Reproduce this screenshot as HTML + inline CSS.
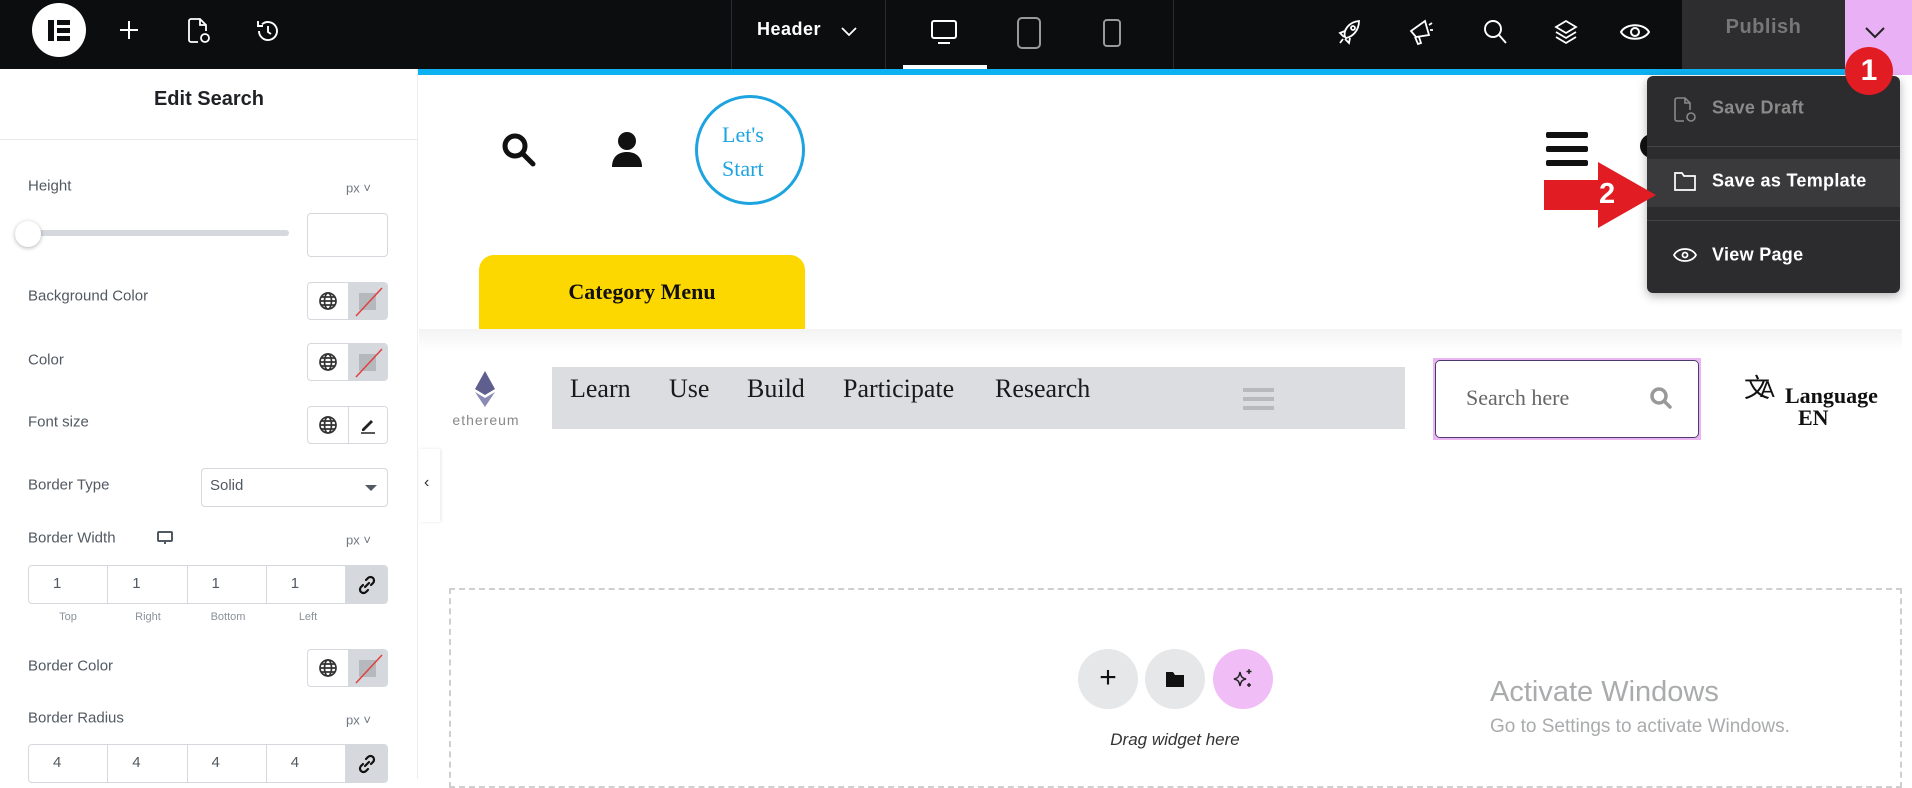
<!DOCTYPE html>
<html><head><meta charset="utf-8"><style>
*{box-sizing:border-box;margin:0;padding:0}
body{width:1912px;height:779px;overflow:hidden;background:#fff;font-family:"Liberation Sans",sans-serif;position:relative}
.a{position:absolute}
.top{left:0;top:0;width:1912px;height:69px;background:#0c0d0f}
.sep{top:0;width:1px;height:69px;background:#2a2c30}
.lbl{position:absolute;left:28px;font-size:15px;color:#515962;transform:translateY(-50%)}
.px{position:absolute;left:346px;font-size:13px;color:#6d7882;transform:translateY(-50%)}
.box{position:absolute;border:1px solid #d5d8dc;border-radius:4px;background:#fff}
.ctl{position:absolute;left:307px;width:81px;height:38px;border:1px solid #d5d8dc;border-radius:4px;overflow:hidden;display:flex}
.ctl .g{width:41px;display:flex;align-items:center;justify-content:center;border-right:1px solid #d5d8dc}
.ctl .s{flex:1;background:#d5d8dc;position:relative}
.dims{position:absolute;left:28px;width:360px;height:39px;border:1px solid #d5d8dc;border-radius:4px;display:flex;overflow:hidden}
.dims div{flex:1;border-right:1px solid #d5d8dc;font-size:15px;color:#515962;padding:9px 0 0 24px}
.dims .lk{flex:0 0 41px;background:#d5d8dc;border:0;padding:0;display:flex;align-items:center;justify-content:center}
.sub{position:absolute;top:611px;font-size:11px;color:#8a929a;width:80px;text-align:center}
.serif{font-family:"Liberation Serif",serif}
.nav{font-family:"Liberation Serif",serif;font-size:26px;color:#1a1a1a;top:374px}
.mi{position:absolute;left:1712px;font-size:18px;font-weight:bold;color:#fff;letter-spacing:.3px;transform:translateY(-50%)}
</style></head><body>
<svg width="0" height="0" style="position:absolute"><defs>
<symbol id="gl" viewBox="0 0 20 20"><g fill="none" stroke="#333" stroke-width="1.7"><circle cx="10" cy="10" r="8"/><ellipse cx="10" cy="10" rx="3.5" ry="8"/><path d="M2 10h16M3.5 6h13M3.5 14h13"/></g></symbol>
<symbol id="lk" viewBox="0 0 20 20"><g fill="none" stroke="#111" stroke-width="2.2" stroke-linecap="round"><path d="M8 12l4-4"/><path d="M9 5l2-2a3.5 3.5 0 0 1 5 5l-2 2"/><path d="M11 15l-2 2a3.5 3.5 0 0 1-5-5l2-2"/></g></symbol>
</defs></svg>
<!-- top bar -->
<div class="a top"></div>
<div class="a" style="left:32px;top:3px;width:54px;height:54px;border-radius:50%;background:#fff"></div>
<div class="a" style="left:48px;top:20px;width:6px;height:21px;background:#0c0d0f"></div>
<div class="a" style="left:57px;top:20px;width:13px;height:5px;background:#0c0d0f"></div>
<div class="a" style="left:57px;top:28px;width:13px;height:5px;background:#0c0d0f"></div>
<div class="a" style="left:57px;top:36px;width:13px;height:5px;background:#0c0d0f"></div>
<svg class="a" style="left:117px;top:18px" width="24" height="24" viewBox="0 0 24 24" stroke="#fff" stroke-width="2" fill="none"><path d="M12 3v18M3 12h18"/></svg>
<svg class="a" style="left:186px;top:17px" width="26" height="28" viewBox="0 0 26 28" stroke="#fff" stroke-width="1.8" fill="none"><path d="M12 25H5a2 2 0 0 1-2-2V4a2 2 0 0 1 2-2h9l6 6v6"/><path d="M14 2v6h6"/><circle cx="19" cy="21" r="4"/></svg>
<svg class="a" style="left:255px;top:18px" width="26" height="26" viewBox="0 0 26 26" stroke="#fff" stroke-width="1.9" fill="none"><path d="M4 13a9 9 0 1 0 3-6.7"/><path d="M3 3v5h5"/><path d="M13 8v6l3 2"/></svg>
<div class="a sep" style="left:731px"></div>
<div class="a sep" style="left:885px"></div>
<div class="a sep" style="left:1173px"></div>
<div class="a" style="left:757px;top:19px;font-size:18px;font-weight:bold;color:#fff;letter-spacing:.5px">Header</div>
<svg class="a" style="left:840px;top:24px" width="18" height="14" viewBox="0 0 18 14" stroke="#fff" stroke-width="1.8" fill="none"><path d="M2 4l7 7 7-7"/></svg>
<svg class="a" style="left:930px;top:18px" width="28" height="28" viewBox="0 0 28 28" stroke="#fff" stroke-width="2" fill="none"><rect x="2" y="3" width="24" height="17" rx="2"/><path d="M8 25h12"/></svg>
<div class="a" style="left:903px;top:65px;width:84px;height:4px;background:#fff"></div>
<svg class="a" style="left:1015px;top:16px" width="28" height="34" viewBox="0 0 28 34" stroke="#999" stroke-width="2" fill="none"><rect x="3" y="2" width="22" height="30" rx="4"/></svg>
<svg class="a" style="left:1102px;top:18px" width="20" height="30" viewBox="0 0 20 30" stroke="#999" stroke-width="2" fill="none"><rect x="2" y="2" width="16" height="26" rx="3"/></svg>
<svg class="a" style="left:1337px;top:18px" width="26" height="28" viewBox="0 0 26 28" stroke="#fff" stroke-width="1.8" fill="none"><path d="M8 19C6 12 12 4 22 3c0 10-7 16-13 17z"/><circle cx="16" cy="10" r="2"/><path d="M8 13l-5 2 4 4M13 20l-1 5-4-4M6 21l-3 4"/></svg>
<svg class="a" style="left:1407px;top:17px" width="28" height="30" viewBox="0 0 28 30" stroke="#fff" stroke-width="1.8" fill="none"><path d="M4 14l14-10 4 14-13 2z"/><path d="M8 20l3 7 3-1-2-6"/><path d="M22 8l3-2M23 13h3"/></svg>
<svg class="a" style="left:1482px;top:18px" width="26" height="28" viewBox="0 0 26 28" stroke="#fff" stroke-width="1.9" fill="none"><circle cx="11" cy="11" r="8"/><path d="M17 17l7 8"/></svg>
<svg class="a" style="left:1553px;top:18px" width="26" height="28" viewBox="0 0 26 28" stroke="#fff" stroke-width="1.8" fill="none"><path d="M13 3L3 9l10 6 10-6z"/><path d="M3 14l10 6 10-6M3 19l10 6 10-6"/></svg>
<svg class="a" style="left:1619px;top:20px" width="32" height="24" viewBox="0 0 32 24" stroke="#fff" stroke-width="2" fill="none"><path d="M2 12C7 3 25 3 30 12 25 21 7 21 2 12z"/><circle cx="16" cy="12" r="4"/></svg>
<div class="a" style="left:1682px;top:0;width:163px;height:69px;background:#2d2d2f"></div>
<div class="a" style="left:1682px;top:16px;width:163px;text-align:center;font-size:20px;font-weight:bold;color:#777;letter-spacing:.5px">Publish</div>
<div class="a" style="left:1845px;top:0;width:67px;height:75px;background:#eab0f5"></div>
<svg class="a" style="left:1863px;top:24px" width="24" height="16" viewBox="0 0 24 16" stroke="#222" stroke-width="2" fill="none"><path d="M3 4l9 9 9-9"/></svg>
<!-- blue line -->
<div class="a" style="left:418px;top:69px;width:1427px;height:6px;background:#0db0f0"></div>
<!-- sidebar -->
<div class="a" style="left:0;top:69px;width:418px;height:710px;background:#fff;border-right:1px solid #eee"></div>
<div class="a" style="left:0;top:88px;width:418px;text-align:center;font-size:20px;font-weight:bold;color:#1f2124">Edit Search</div>
<div class="a" style="left:0;top:139px;width:418px;height:1px;background:#e6e8ea"></div>
<div class="lbl" style="top:186px">Height</div><div class="px" style="top:188px">px ˅</div>
<div class="a" style="left:28px;top:230px;width:261px;height:6px;border-radius:3px;background:#d5d8dc"></div>
<div class="a" style="left:15px;top:221px;width:26px;height:26px;border-radius:50%;background:#fff;box-shadow:0 1px 4px rgba(0,0,0,.3)"></div>
<div class="box" style="left:307px;top:213px;width:81px;height:44px"></div>
<div class="lbl" style="top:296px">Background Color</div>
<div class="lbl" style="top:360px">Color</div>
<div class="lbl" style="top:422px">Font size</div>
<div class="lbl" style="top:485px">Border Type</div>
<div class="lbl" style="top:538px">Border Width</div>
<svg class="a" style="left:156px;top:530px" width="18" height="16" viewBox="0 0 18 16" fill="none" stroke="#515962" stroke-width="2"><rect x="2" y="2" width="14" height="9" rx="1"/><path d="M9 12v2"/></svg>
<div class="px" style="top:540px">px ˅</div>
<div class="lbl" style="top:666px">Border Color</div>
<div class="lbl" style="top:718px">Border Radius</div><div class="px" style="top:720px">px ˅</div>
<!-- color controls -->
<div class="ctl" style="top:282px"><div class="g"><svg width="20" height="20"><use href="#gl"/></svg></div><div class="s"><svg width="40" height="38" style="position:absolute;left:0;top:0"><rect x="10" y="10" width="17" height="17" fill="#b5b8bc"/><path d="M7 33L33 5" stroke="#e04040" stroke-width="1.5"/></svg></div></div>
<div class="ctl" style="top:343px"><div class="g"><svg width="20" height="20"><use href="#gl"/></svg></div><div class="s"><svg width="40" height="38" style="position:absolute;left:0;top:0"><rect x="10" y="10" width="17" height="17" fill="#b5b8bc"/><path d="M7 33L33 5" stroke="#e04040" stroke-width="1.5"/></svg></div></div>
<div class="ctl" style="top:406px"><div class="g"><svg width="20" height="20"><use href="#gl"/></svg></div><div class="s" style="background:#fff;display:flex;align-items:center;justify-content:center"><svg width="20" height="20" viewBox="0 0 20 20"><path d="M4 14l9-9 2 2-9 9H4z" fill="#222"/><path d="M3 18h14" stroke="#222" stroke-width="1.5"/></svg></div></div>
<div class="ctl" style="top:649px"><div class="g"><svg width="20" height="20"><use href="#gl"/></svg></div><div class="s"><svg width="40" height="38" style="position:absolute;left:0;top:0"><rect x="10" y="10" width="17" height="17" fill="#b5b8bc"/><path d="M7 33L33 5" stroke="#e04040" stroke-width="1.5"/></svg></div></div>
<div class="box" style="left:201px;top:468px;width:187px;height:39px;font-size:15px;color:#515962;padding:8px 0 0 8px">Solid</div>
<div class="a" style="left:365px;top:485px;border-left:6px solid transparent;border-right:6px solid transparent;border-top:6px solid #515962"></div>
<div class="dims" style="top:565px"><div>1</div><div>1</div><div>1</div><div>1</div><div class="lk"><svg width="20" height="20"><use href="#lk"/></svg></div></div>
<div class="sub" style="left:28px">Top</div><div class="sub" style="left:108px">Right</div><div class="sub" style="left:188px">Bottom</div><div class="sub" style="left:268px">Left</div>
<div class="dims" style="top:744px"><div>4</div><div>4</div><div>4</div><div>4</div><div class="lk"><svg width="20" height="20"><use href="#lk"/></svg></div></div>
<!-- collapse tab -->
<div class="a" style="left:419px;top:449px;width:21px;height:73px;background:#fff;box-shadow:1px 0 3px rgba(0,0,0,.1)"></div>
<div class="a" style="left:424px;top:474px;font-size:16px;color:#333">‹</div>
<!-- canvas header -->
<svg class="a" style="left:500px;top:131px" width="38" height="38" viewBox="0 0 38 38" fill="none" stroke="#111" stroke-width="5"><circle cx="15" cy="15" r="10"/><path d="M23 23l10 10" stroke-linecap="round"/></svg>
<svg class="a" style="left:610px;top:131px" width="34" height="38" viewBox="0 0 34 38" fill="#111"><circle cx="17" cy="10" r="9"/><path d="M2 36c0-10 6-15 15-15s15 5 15 15z"/></svg>
<div class="a serif" style="left:695px;top:95px;width:110px;height:110px;border:3px solid #1da4e0;border-radius:50%;color:#1da4e0;font-size:22px;line-height:34px;padding:20px 0 0 24px">Let's<br>Start</div>
<div class="a" style="left:1546px;top:132px;width:42px;height:6px;background:#111;border-radius:2px"></div>
<div class="a" style="left:1546px;top:146px;width:42px;height:6px;background:#111;border-radius:2px"></div>
<div class="a" style="left:1546px;top:160px;width:42px;height:6px;background:#111;border-radius:2px"></div>
<div class="a" style="left:479px;top:255px;width:326px;height:74px;background:#fcd800;border-radius:15px 15px 0 0"></div>
<div class="a serif" style="left:479px;top:279px;width:326px;text-align:center;font-size:22px;font-weight:bold;color:#111">Category Menu</div>
<div class="a" style="left:419px;top:329px;width:1483px;height:22px;background:linear-gradient(#f3f3f3,#fff)"></div>
<!-- eth logo -->
<svg class="a" style="left:474px;top:370px" width="22" height="38" viewBox="0 0 22 38"><path d="M11 1L1 19l10 6 10-6z" fill="#5e5f8f"/><path d="M1 22l10 15 10-15-10 6z" fill="#8a8bb5"/></svg>
<div class="a" style="left:446px;top:412px;width:80px;text-align:center;font-size:14px;color:#888;letter-spacing:1px">ethereum</div>
<div class="a" style="left:552px;top:367px;width:853px;height:62px;background:#dcdde0"></div>
<div class="a nav" style="left:570px">Learn</div><div class="a nav" style="left:669px">Use</div><div class="a nav" style="left:747px">Build</div><div class="a nav" style="left:843px">Participate</div><div class="a nav" style="left:995px">Research</div>
<div class="a" style="left:1243px;top:388px;width:31px;height:4px;background:#b8b9bc"></div>
<div class="a" style="left:1243px;top:397px;width:31px;height:4px;background:#b8b9bc"></div>
<div class="a" style="left:1243px;top:406px;width:31px;height:4px;background:#b8b9bc"></div>
<div class="a" style="left:1433px;top:358px;width:268px;height:82px;border:3px solid #ebb5f3"></div>
<div class="a" style="left:1435px;top:360px;width:264px;height:78px;border:1.5px solid #4b3b6b;border-radius:5px;background:#fff"></div>
<div class="a serif" style="left:1466px;top:385px;font-size:22px;color:#666">Search here</div>
<svg class="a" style="left:1649px;top:386px" width="24" height="24" viewBox="0 0 24 24" fill="none" stroke="#999" stroke-width="3.5"><circle cx="10" cy="10" r="7"/><path d="M15 15l6 6" stroke-linecap="round"/></svg>
<div class="a" style="left:1744px;top:368px;font-size:26px;color:#111">文<span style="font-size:22px;margin-left:-10px">A</span></div>
<div class="a serif" style="left:1785px;top:383px;font-size:22px;font-weight:bold;color:#111">Language</div>
<div class="a serif" style="left:1798px;top:405px;font-size:22px;font-weight:bold;color:#111">EN</div>
<!-- dashed area -->
<div class="a" style="left:449px;top:588px;width:1453px;height:200px;border:2px dashed #cfcfcf"></div>
<div class="a" style="left:1078px;top:649px;width:60px;height:60px;border-radius:50%;background:#e6e7e8;text-align:center;font-size:30px;line-height:58px;color:#111">+</div>
<div class="a" style="left:1145px;top:649px;width:60px;height:60px;border-radius:50%;background:#e6e7e8"></div>
<svg class="a" style="left:1164px;top:668px" width="22" height="22" viewBox="0 0 22 22"><path d="M2 4h7l2 3h9v12H2z" fill="#111"/></svg>
<div class="a" style="left:1213px;top:649px;width:60px;height:60px;border-radius:50%;background:#f0bdf7"></div>
<svg class="a" style="left:1231px;top:667px" width="24" height="24" viewBox="0 0 24 24" fill="none" stroke="#222" stroke-width="1.5"><path d="M9 5c1 5 2 6 6 7-4 1-5 2-6 7-1-5-2-6-6-7 4-1 5-2 6-7z"/><path d="M18 2v5M15.5 4.5h5M18 16v4M16 18h4"/></svg>
<div class="a" style="left:1075px;top:730px;width:200px;text-align:center;font-size:17px;font-style:italic;color:#333">Drag widget here</div>
<div class="a" style="left:1490px;top:676px;font-size:29px;color:#a9abad">Activate Windows</div>
<div class="a" style="left:1490px;top:716px;font-size:19px;color:#a9abad">Go to Settings to activate Windows.</div>
<!-- partial circle behind dropdown -->
<div class="a" style="left:1640px;top:134px;width:24px;height:24px;border-radius:50%;background:#111"></div>
<!-- dropdown -->
<div class="a" style="left:1647px;top:76px;width:253px;height:217px;background:#2c2c2e;border-radius:6px;box-shadow:0 3px 10px rgba(0,0,0,.3)"></div>
<div class="a" style="left:1647px;top:146px;width:253px;height:1px;background:#444"></div>
<div class="a" style="left:1647px;top:159px;width:253px;height:48px;background:#3a3a3c"></div>
<div class="a" style="left:1647px;top:220px;width:253px;height:1px;background:#444"></div>
<svg class="a" style="left:1673px;top:96px" width="24" height="28" viewBox="0 0 24 28" fill="none" stroke="#888" stroke-width="1.6"><path d="M11 25H4a2 2 0 0 1-2-2V4a2 2 0 0 1 2-2h8l5 5v7"/><path d="M12 2v5h5"/><circle cx="18" cy="21" r="4"/></svg>
<div class="mi" style="top:108px;color:#8a8a8a">Save Draft</div>
<svg class="a" style="left:1673px;top:170px" width="24" height="22" viewBox="0 0 24 22" fill="none" stroke="#fff" stroke-width="1.7"><path d="M2 3h7l2 3h11v14H2z"/></svg>
<div class="mi" style="top:181px">Save as Template</div>
<svg class="a" style="left:1672px;top:246px" width="26" height="18" viewBox="0 0 26 18" fill="none" stroke="#fff" stroke-width="1.8"><path d="M2 9C6 1 20 1 24 9 20 17 6 17 2 9z"/><circle cx="13" cy="9" r="2.5"/></svg>
<div class="mi" style="top:255px">View Page</div>
<!-- red arrow -->
<svg class="a" style="left:1542px;top:160px" width="116" height="70" viewBox="0 0 116 70"><path d="M2 20h54V2l58 33-58 33V50H2z" fill="#e21c23"/></svg>
<div class="a" style="left:1599px;top:178px;font-size:29px;font-weight:bold;color:#fff">2</div>
<!-- badge 1 -->
<div class="a" style="left:1845px;top:47px;width:48px;height:48px;border-radius:50%;background:#e21c23;color:#fff;font-size:30px;font-weight:bold;text-align:center;line-height:48px">1</div>
</body></html>
